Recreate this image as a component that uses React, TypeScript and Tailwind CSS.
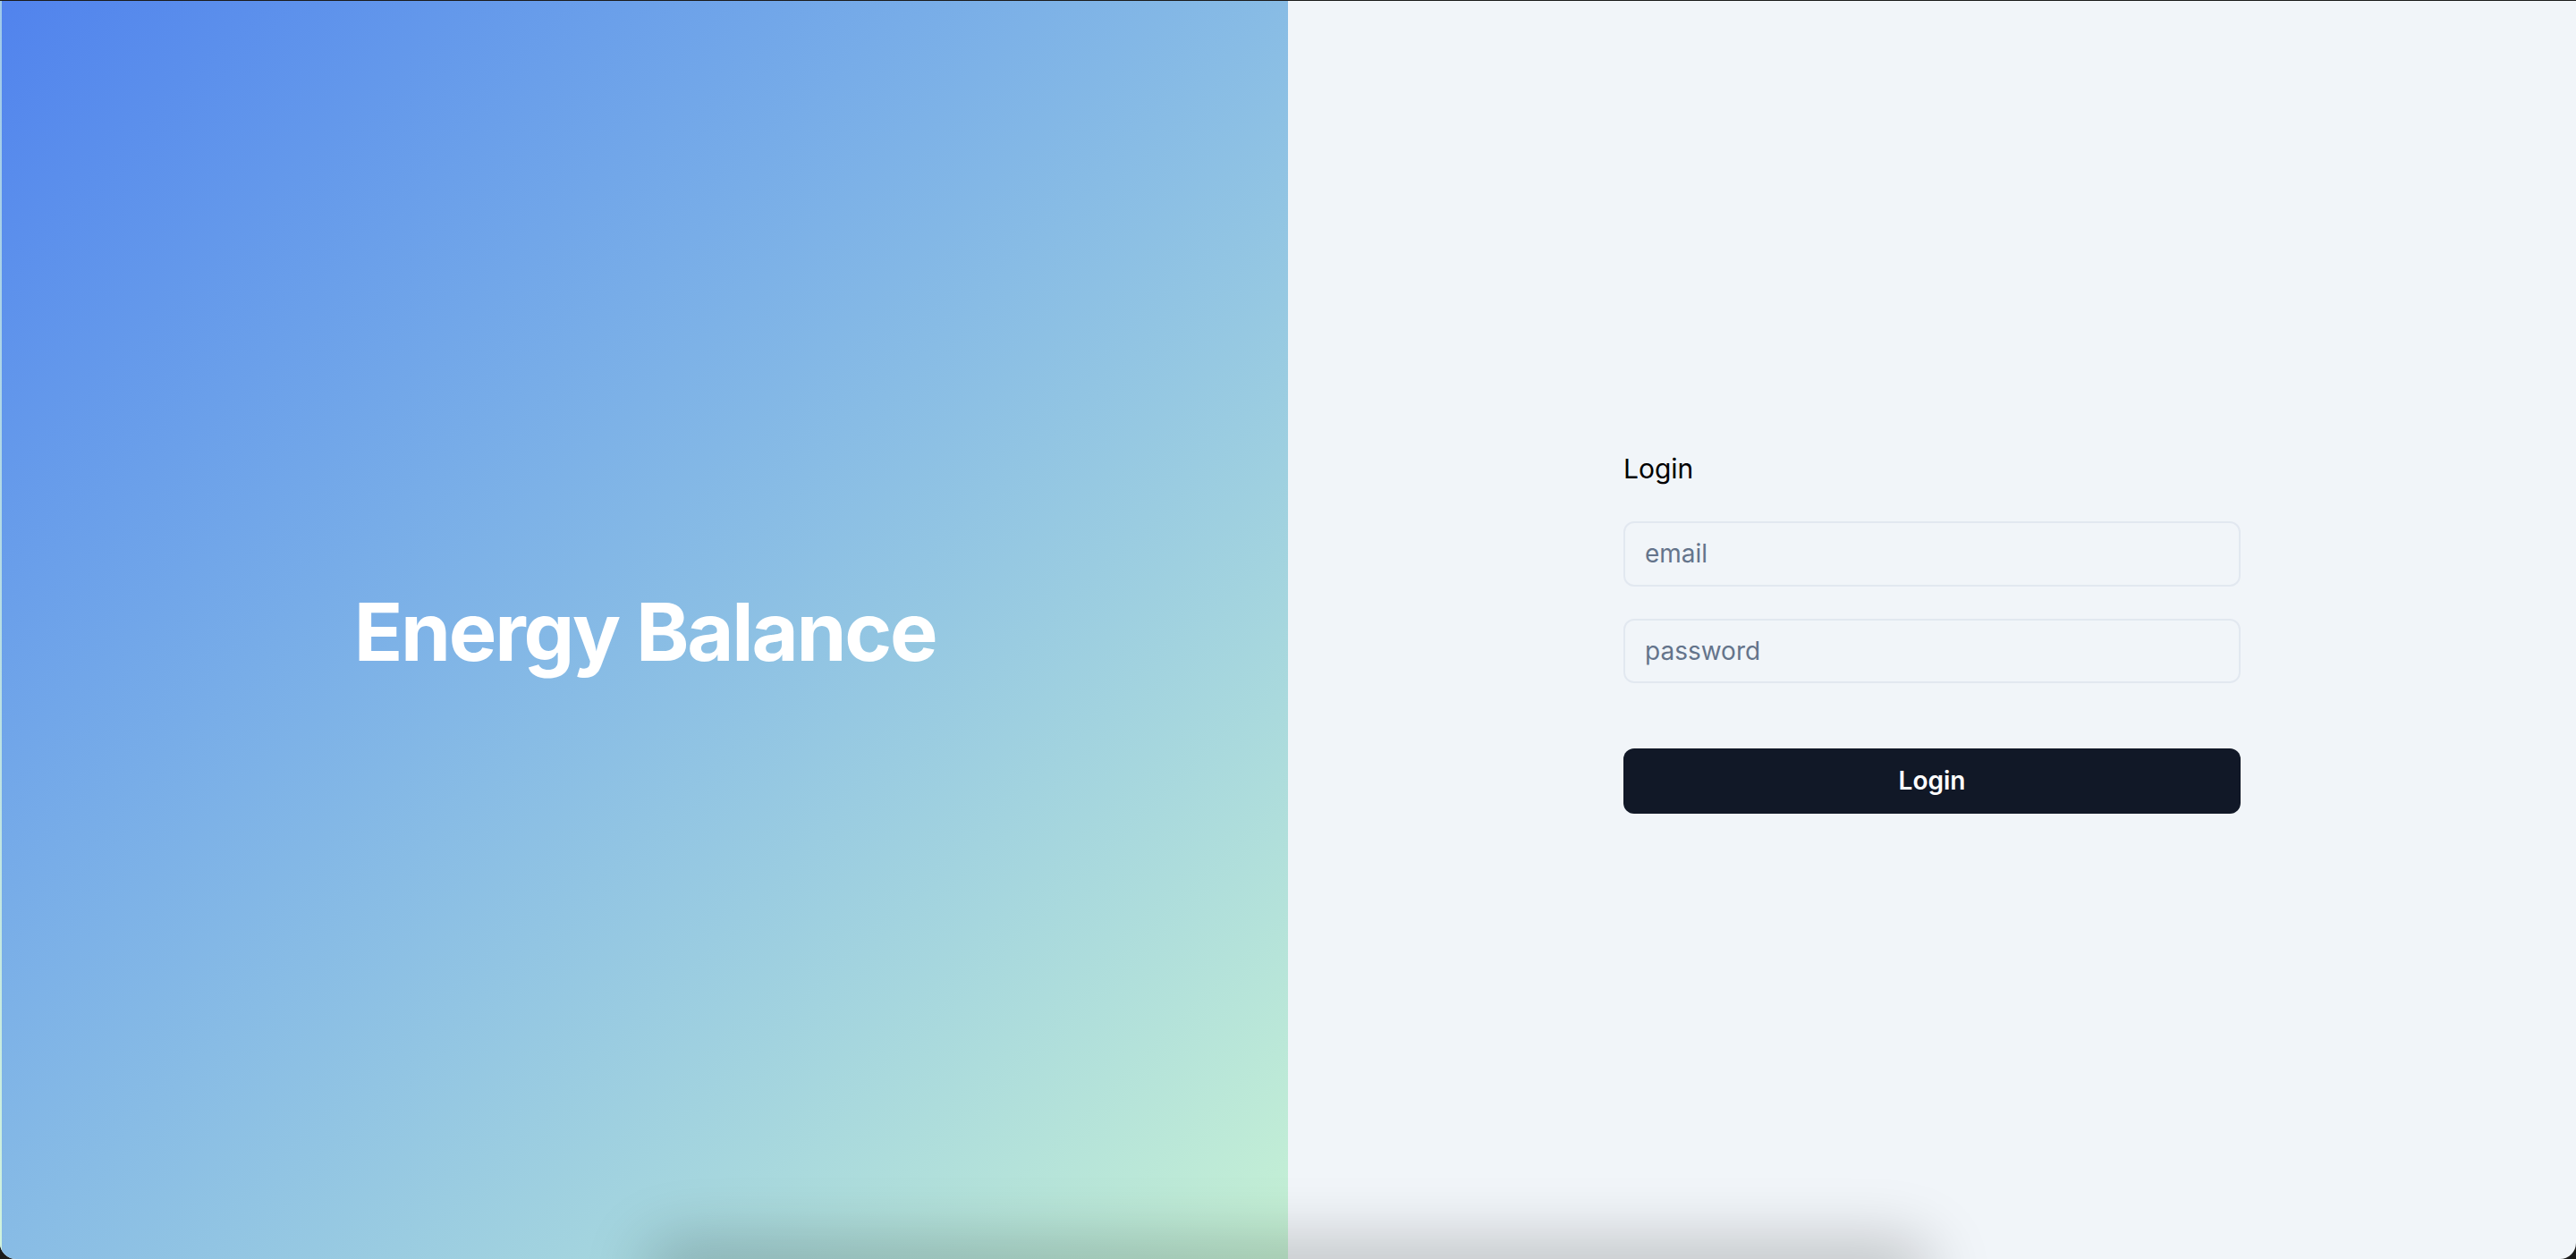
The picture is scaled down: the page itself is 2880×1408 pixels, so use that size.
export default function App() {
    return (
        <div className="h-[1408px] w-full bg-[#1b1b1b] pt-px" style={{ fontFamily: "Inter, 'Noto Sans', sans-serif" }}>
            <div className="relative flex h-full w-full overflow-hidden rounded-b-[18px] bg-[#f1f5f9]">
                <div className="flex w-1/2 items-center justify-center border-l-2 border-white/20 bg-gradient-to-br from-[#5183ed] to-[#c6f1d4]">
                    <h1 className="pt-1 text-[90px] font-bold tracking-tight text-white">Energy Balance</h1>
                </div>
                <div className="flex w-1/2 items-center justify-center">
                    <form className="flex w-[690px] flex-col">
                        <p className="mb-[35px] text-[30px] leading-[48px] text-black">Login</p>
                        <input
                            type="text"
                            placeholder="email"
                            className="h-[73px] rounded-xl border-2 border-[#e2e8f0] bg-transparent px-[22px] text-[28px] text-slate-900 placeholder:text-[#64748b] outline-none"
                        />
                        <input
                            type="password"
                            placeholder="password"
                            className="mt-9 h-[72px] rounded-xl border-2 border-[#e2e8f0] bg-transparent px-[22px] text-[28px] text-slate-900 placeholder:text-[#64748b] outline-none"
                        />
                        <button type="button" className="mt-[73px] h-[73px] rounded-xl bg-[#111827] text-[28px] font-semibold text-white">
                            Login
                        </button>
                    </form>
                </div>
                <div className="absolute -bottom-[70px] left-[720px] h-[70px] w-[1440px] rounded-full shadow-[0_-20px_70px_rgba(0,0,0,0.22)]"></div>
            </div>
        </div>
    )
}
